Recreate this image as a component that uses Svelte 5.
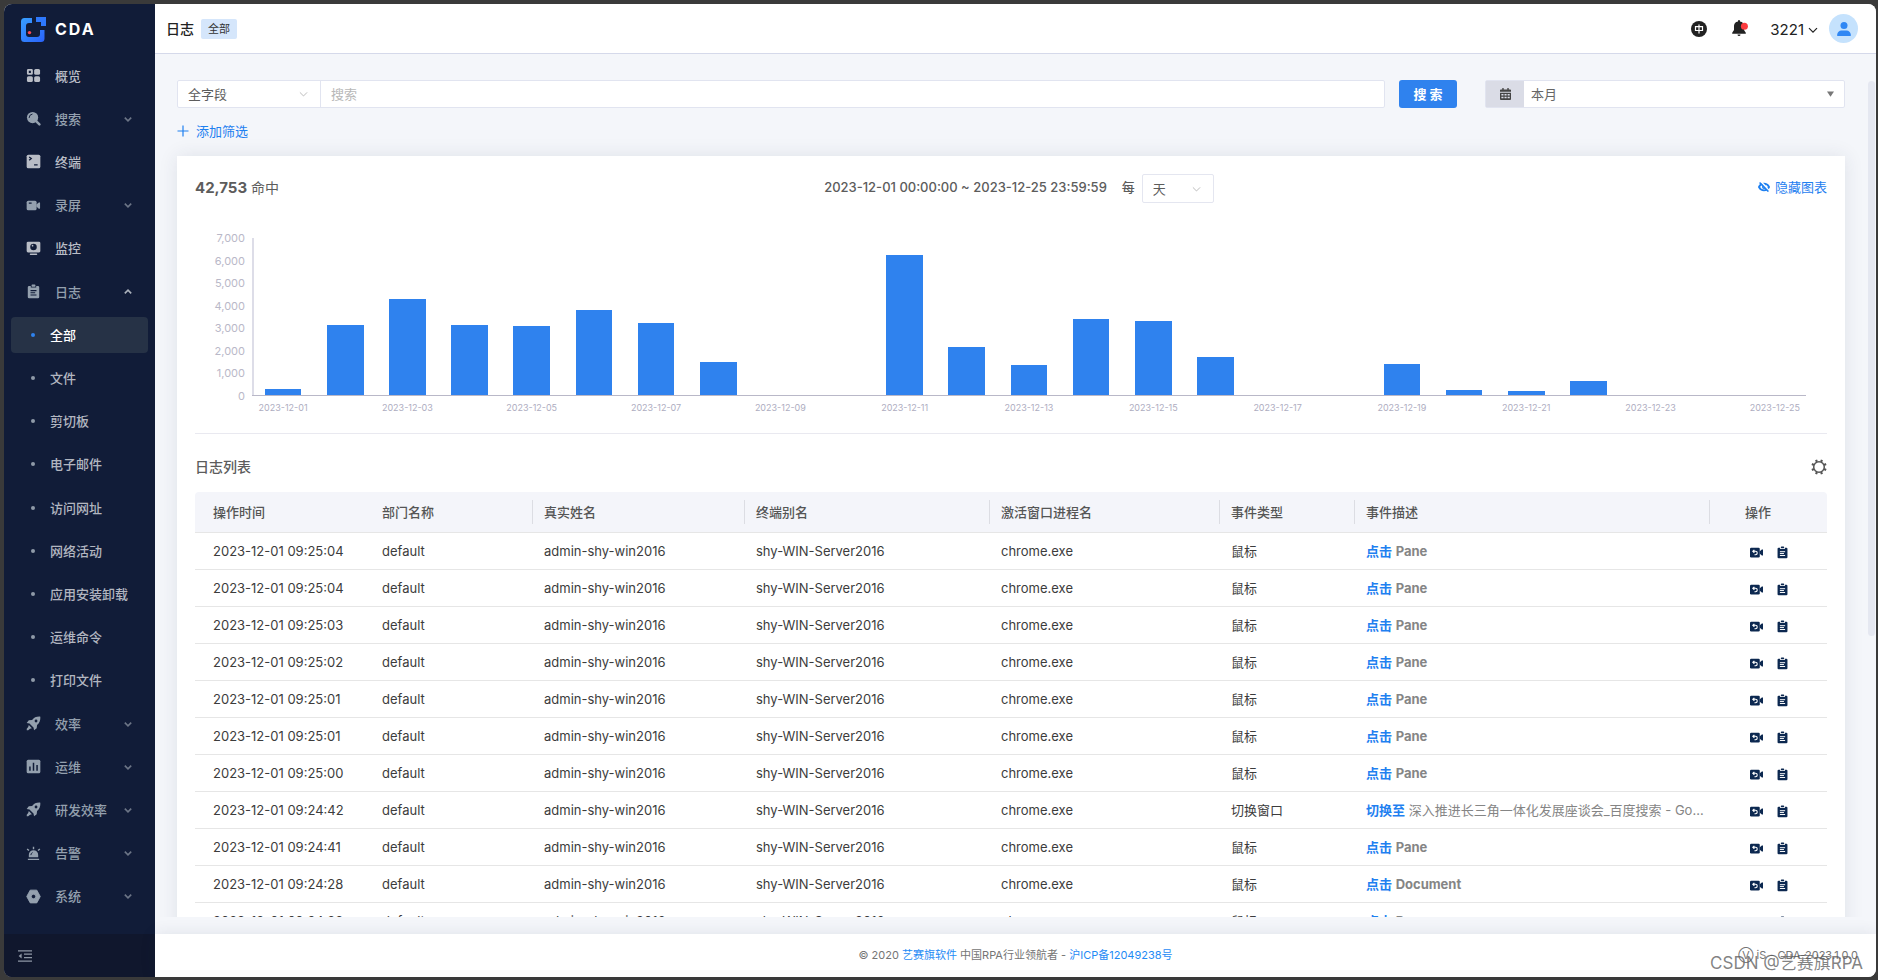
<script>
  const menu = [
    { icon: 'grid', label: '概览' },
    { icon: 'search', label: '搜索', fold: true },
    { icon: 'terminal', label: '终端' },
    { icon: 'video', label: '录屏', fold: true },
    { icon: 'monitor', label: '监控' },
    { icon: 'clipboard', label: '日志', fold: true, open: true },
    { sub: true, label: '全部', active: true },
    { sub: true, label: '文件' },
    { sub: true, label: '剪切板' },
    { sub: true, label: '电子邮件' },
    { sub: true, label: '访问网址' },
    { sub: true, label: '网络活动' },
    { sub: true, label: '应用安装卸载' },
    { sub: true, label: '运维命令' },
    { sub: true, label: '打印文件' },
    { icon: 'rocket', label: '效率', fold: true },
    { icon: 'bars', label: '运维', fold: true },
    { icon: 'rocket', label: '研发效率', fold: true },
    { icon: 'siren', label: '告警', fold: true },
    { icon: 'nut', label: '系统', fold: true }
  ];

  const hits = [270, 3110, 4265, 3115, 3095, 3805, 3225, 1490, 0, 0, 6240, 2155, 1340, 3405, 3300, 1695, 0, 0, 1400, 240, 160, 625, 0, 0, 0];
  const peak = 7000;
  const ticks = ['7,000', '6,000', '5,000', '4,000', '3,000', '2,000', '1,000', '0'];
  const day = (i) => `2023-12-${String(i + 1).padStart(2, '0')}`;

  const columns = [
    { name: '操作时间', w: 176 },
    { name: '部门名称', w: 162, sep: true },
    { name: '真实姓名', w: 212, sep: true },
    { name: '终端别名', w: 245, sep: true },
    { name: '激活窗口进程名', w: 230, sep: true },
    { name: '事件类型', w: 135, sep: true },
    { name: '事件描述', w: 355, sep: true },
    { name: '操作', w: 117 }
  ];
  const total = columns.reduce((s, c) => s + c.w, 0);

  const click = (time, target = 'Pane') => ({ time, type: '鼠标', verb: '点击', target, strong: true });
  const rows = [
    click('09:25:04'),
    click('09:25:04'),
    click('09:25:03'),
    click('09:25:02'),
    click('09:25:01'),
    click('09:25:01'),
    click('09:25:00'),
    { time: '09:24:42', type: '切换窗口', verb: '切换至', target: '深入推进长三角一体化发展座谈会_百度搜索 - Google Chrome' },
    click('09:24:41'),
    click('09:24:28', 'Document'),
    click('09:24:28')
  ];
</script>

{#snippet icon(name)}
  <svg class="icon" viewBox="0 0 16 16" aria-hidden="true">
    {#if name === 'grid'}
      <path fill-rule="evenodd" d="M2.500 1h3.300A1.500 1.500 0 0 1 7.300 2.500v3.300a1.500 1.500 0 0 1-1.500 1.500H2.500A1.500 1.500 0 0 1 1 5.800V2.500A1.500 1.500 0 0 1 2.500 1zM3 3v2.200h2.200V3z" />
      <rect x="8.700" y="1" width="6.300" height="6.300" rx="1.700" /><rect x="1" y="8.700" width="6.300" height="6.300" rx="1.700" /><rect x="8.700" y="8.700" width="6.300" height="6.300" rx="1.700" />
    {:else if name === 'search'}
      <circle cx="7" cy="7" r="6" /><path d="M10 10l4.300 4.300" stroke="currentColor" stroke-width="2.600" stroke-linecap="round" />
      <path d="M3.300 7A3.800 3.800 0 0 1 6.500 3.300" fill="none" stroke="#111c38" stroke-width="1" stroke-linecap="round" />
    {:else if name === 'terminal'}
      <rect x=".7" y=".7" width="14.600" height="14.600" rx="1.800" /><path d="M3.400 3.200l2.200 1.600-2.200 1.800M8.600 11.500h3.800" fill="none" stroke="#111c38" stroke-width="1.400" />
    {:else if name === 'video'}
      <rect x=".7" y="3" width="10.600" height="10" rx="1.600" /><path d="M11 7l3-2.600 1 .6v6l-1 .6L11 9z" /><path d="M3 5.500h3" stroke="#111c38" stroke-width="1.200" />
    {:else if name === 'monitor'}
      <rect x=".7" y=".7" width="14.600" height="11.500" rx="1.500" /><circle cx="8" cy="6.300" r="3.500" fill="#111c38" /><circle cx="7" cy="5" r=".9" /><rect x="4" y="13.400" width="8" height="1.500" rx=".7" />
    {:else if name === 'clipboard'}
      <path d="M3.300 2h1.800v1.800h5.800V2h1.800a1.400 1.400 0 0 1 1.400 1.400v10.400a1.400 1.400 0 0 1-1.400 1.400H3.300a1.400 1.400 0 0 1-1.400-1.400V3.400A1.400 1.400 0 0 1 3.300 2z" /><rect x="6" y=".6" width="4" height="2.300" rx=".6" />
      <path d="M4.800 7h6.400M4.800 9.300h5M4.800 11.700h6.400" stroke="var(--line, #111c38)" stroke-width="1.200" />
    {:else if name === 'rocket'}
      <path fill-rule="evenodd" d="M15.300.7c-4-.3-6.800 1-8.800 3.500L3 4.600.7 7.400l3 .6 4.300 4.300.6 3 2.800-2.300.4-3.500C14.300 7.500 15.600 4.700 15.300.7zM10.700 3.800a1.500 1.500 0 1 1 0 3 1.500 1.500 0 0 1 0-3z" /><path d="M3 9.700l3.300 3.300-2 .7-2 1.500H.8v-1.500l1.500-2z" />
    {:else if name === 'bars'}
      <rect x=".7" y=".7" width="14.600" height="14.600" rx="1.600" /><path d="M4.200 8v4.600M8 4v8.600M11.800 6.400v6.200" stroke="#111c38" stroke-width="1.600" />
    {:else if name === 'siren'}
      <path d="M3 12V9.500a5 5 0 0 1 10 0V12z" /><path d="M2 14.300h12" stroke="currentColor" stroke-width="1.500" /><path d="M8 .8v2.700M1.200 3.200l2 1.600M14.800 3.200l-2 1.600" stroke="currentColor" stroke-width="1.500" /><path d="M5.200 9.700A3 3 0 0 1 7 7" fill="none" stroke="#111c38" />
    {:else if name === 'nut'}
      <path fill-rule="evenodd" d="M4.500 1.200h7L15.200 8l-3.700 6.800h-7L.8 8zM8 5.600a2.400 2.400 0 1 0 0 4.800 2.400 2.400 0 0 0 0-4.800z" stroke="currentColor" stroke-linejoin="round" />
    {:else if name === 'replay'}
      <rect x="0" y="2" width="12" height="12" rx="1.500" /><path d="M12 6.500l2.600-2.300H16v7.600h-1.400L12 9.500z" /><path d="M3.600 6.500h3.200a2 2 0 0 1 0 4.200H5.500M5.400 4.700L3.500 6.500l1.900 1.800" fill="none" stroke="#fff" stroke-width="1.400" />
    {/if}
  </svg>
{/snippet}

{#snippet chevron()}
  <svg class="chev" viewBox="0 0 10 10" aria-hidden="true"><path d="M1 3.200L5 7.200l4-4" /></svg>
{/snippet}

<div class="desktop">
  <div class="window">
    <aside>
      <div class="brand">
        <svg viewBox="0 0 25 25" width="25" height="25" aria-hidden="true">
          <defs><linearGradient id="lg" x1="0" x2="1" y1="0" y2="1"><stop offset="0" stop-color="#38a0ff" /><stop offset="1" stop-color="#2a62fb" /></linearGradient></defs>
          <path fill="url(#lg)" d="M3.500 1H11v5H8a3 3 0 0 0-3 3v8a3 3 0 0 0 3 3h8a3 3 0 0 0 3-3v-4h4.500v8.500a3.500 3.500 0 0 1-3.500 3.500h-16.500A3.500 3.500 0 0 1 0 21.500v-17A3.500 3.500 0 0 1 3.500 1z" />
          <path fill="#2e78fc" d="M15 0h10v9h-5V5h-5z" />
          <circle cx="8.500" cy="15.600" r="1.700" fill="#ff4752" />
        </svg>
        <strong>CDA</strong>
      </div>
      <nav>
        {#each menu as m}
          <a href="#menu" class:sub={m.sub} class:active={m.active} class:fold={m.fold}>
            {#if m.sub}<i class="dot"></i>{:else}{@render icon(m.icon)}{/if}
            <span>{m.label}</span>
            {#if m.fold}<em class:open={m.open}>{@render chevron()}</em>{/if}
          </a>
        {/each}
      </nav>
      <button class="collapse" aria-label="收起菜单">
        <svg viewBox="0 0 14 12" width="14" height="12"><path d="M0 .8h14M6 4.200h8M6 7.600h8M0 11.200h14" stroke="currentColor" stroke-width="1.200" /><path d="M3.600 3.500v5L.6 6z" fill="currentColor" /></svg>
      </button>
    </aside>

    <main>
      <header>
        <h1>日志</h1>
        <span class="tag">全部</span>
        <div class="tools">
          <button aria-label="语言">
            <svg viewBox="0 0 16 16" width="16" height="16"><circle cx="8" cy="8" r="8" fill="#222" /><path d="M4.500 5.600h7v3.900h-7zM8 3.400v9" fill="none" stroke="#fff" stroke-width="1.200" /></svg>
          </button>
          <button class="bell" aria-label="通知">
            <svg viewBox="0 0 16 17" width="16" height="17"><path d="M6 1a1 1 0 0 1 2 0v.6c2.600.5 4 2.200 4 4.500v4l1.800 2.700v.9H.2v-.9L2 10.100v-4c0-2.300 1.400-4 4-4.500zM5.500 14.500h3a1.500 1.500 0 0 1-3 0z" fill="#222" /><circle cx="12.400" cy="6.300" r="3.500" fill="#fb3b3e" /></svg>
          </button>
          <button class="user">3221{@render chevron()}</button>
          <span class="avatar"><svg viewBox="0 0 14 14" width="14" height="14"><circle cx="7" cy="3.500" r="3.500" fill="#2f87f4" /><path d="M1 13.900c-.6 0-1-.4-.9-1C.4 10 2.300 8.400 4.300 8.400h5.400c2 0 3.900 1.600 4.200 4.500.1.600-.3 1-.9 1z" fill="#2f87f4" /></svg></span>
        </div>
      </header>

      <div class="scroller">
        <form class="query" onsubmit={(e) => e.preventDefault()}>
          <div class="combo">
            <label class="pick field"><select aria-label="字段"><option>全字段</option></select>{@render chevron()}</label>
            <input type="search" aria-label="搜索" placeholder="搜索" />
          </div>
          <button class="primary">搜 索</button>
          <label class="range">
            <span class="cal"><svg viewBox="0 0 12 13" width="11" height="12"><path fill-rule="evenodd" d="M2.500 0H4v1.500h4V0h1.500v1.500H11q1 0 1 1V12q0 1-1 1H1q-1 0-1-1V2.500q0-1 1-1h1.500zM0 4v1h12V4zm1.500 2.500v1.600h2.300V6.500zm3.400 0v1.600h2.300V6.500zm3.400 0v1.600h2.300V6.500zM1.500 9.500v1.600h2.300V9.500zm3.400 0v1.600h2.300V9.500zm3.400 0v1.600h2.300V9.500z" fill="#444" /></svg></span>
            <select aria-label="时间范围"><option>本月</option></select>
            <svg class="tri" viewBox="0 0 8 6" width="7" height="6"><path d="M0 0h8L4 6z" fill="#777" /></svg>
          </label>
        </form>
        <button class="link add"><svg viewBox="0 0 12 12" width="12" height="12"><path d="M6 .5v11M.5 6h11" stroke="currentColor" stroke-width="1.200" /></svg>添加筛选</button>

        <section class="card">
          <div class="summary">
            <p class="count"><b>42,753</b> 命中</p>
            <div class="span">
              <span class="dates">2023-12-01 00:00:00 ~ 2023-12-25 23:59:59</span>
              <label for="unit">每</label>
              <span class="pick unit"><select id="unit"><option>天</option></select>{@render chevron()}</span>
            </div>
            <button class="link hide"><svg viewBox="0 0 12 10" width="12" height="10" fill="none" stroke="currentColor"><path d="M.9 5C2 2.800 3.800 1.700 6 1.700S10 2.800 11.100 5C10 7.200 8.200 8.300 6 8.300S2 7.200.9 5z" stroke-width="1.700" /><circle cx="6" cy="5" r="1.300" stroke-width="1.400" /><path d="M3.400 0l8 9" stroke="#fff" stroke-width="1.500" /><path d="M1.600.6l8.800 9" stroke-width="1.500" /></svg>隐藏图表</button>
          </div>

          <div class="chart">
            <div class="scale">{#each ticks as t}<span>{t}</span>{/each}</div>
            <div class="plot">
              {#each hits as v}
                <div class="slot"><div class="bar" style:height="{(v / peak) * 100}%"></div></div>
              {/each}
            </div>
            <div class="days">
              {#each hits as _, i}<div>{#if i % 2 === 0}<span>{day(i)}</span>{/if}</div>{/each}
            </div>
          </div>

          <div class="heading">
            <h2>日志列表</h2>
            <button aria-label="设置">
              <svg viewBox="0 0 16 16" width="16" height="16" fill="none" stroke="#555"><circle cx="8" cy="8" r="5.300" stroke-width="1.500" />
                {#each [22.5, 67.5, 112.5, 157.5, 202.5, 247.5, 292.5, 337.5] as turn}
                  <path d="M8 .3v2.200" stroke-width="2.200" transform="rotate({turn} 8 8)" />
                {/each}
              </svg>
            </button>
          </div>

          <table>
            <colgroup>{#each columns as c}<col style:width="{(c.w / total) * 100}%" />{/each}</colgroup>
            <thead><tr>{#each columns as c}<th scope="col" class:sep={c.sep}>{c.name}</th>{/each}</tr></thead>
            <tbody>
              {#each rows as r}
                <tr>
                  <td>2023-12-01 {r.time}</td>
                  <td>default</td>
                  <td>admin-shy-win2016</td>
                  <td>shy-WIN-Server2016</td>
                  <td>chrome.exe</td>
                  <td>{r.type}</td>
                  <td class="what"><a href="#event">{r.verb}</a> <span class:strong={r.strong}>{r.target}</span></td>
                  <td class="acts"><button aria-label="回放">{@render icon('replay')}</button><button aria-label="详情">{@render icon('clipboard')}</button></td>
                </tr>
              {/each}
            </tbody>
          </table>
        </section>
      </div>
      <i class="thumb"></i>

      <footer>
        <p>© 2020 <a href="#site">艺赛旗软件</a> 中国RPA行业领航者 - <a href="#icp">沪ICP备12049238号</a></p>
        <span class="version">Ⓥ iS - CDA-2023.1.0.0</span>
        <span class="stamp">CSDN @艺赛旗RPA</span>
      </footer>
    </main>
  </div>
</div>

<style>
  :global(body) { background: #3a3a3a; }
  * { box-sizing: border-box; }
  .desktop {
    height: 100vh;
    padding: 4px 2px 3px 4px;
    background: #3a3a3a;
    color: #3c3c3c;
    font: 13px/20px Inter, "Noto Sans CJK SC", sans-serif;
  }
  .window { display: flex; height: 100%; border-radius: 8px; overflow: hidden; background: #f4f6fa; }
  button, select, input { font: inherit; color: inherit; border: 0; background: none; padding: 0; margin: 0; }
  button { cursor: pointer; }
  a { color: inherit; text-decoration: none; }
  p, h1, h2 { margin: 0; }
  .icon { width: 15px; height: 15px; fill: currentColor; display: block; }
  .chev { width: 10px; height: 10px; fill: none; stroke: currentColor; stroke-width: 1.2; display: block; }

  aside { flex: none; width: 151px; display: flex; flex-direction: column; background: #111c38; }
  .brand { display: flex; align-items: center; gap: 9px; height: 50px; padding: 0 17px; color: #fff; }
  .brand strong { font-size: 16px; font-weight: 700; letter-spacing: 2px; }
  nav { flex: 1; min-height: 0; display: grid; grid-auto-rows: 1fr; padding: 0 7px 16px; }
  nav a { display: flex; align-items: center; align-self: center; height: 36px; padding: 0 16px 0 15px; border-radius: 4px; color: #b9bdc6; font-weight: 500; }
  nav a span { padding-left: 14px; }
  nav a.fold { color: #94a0ae; }
  nav a.sub { color: #b2b6c0; }
  nav a.active { background: #263246; color: #fff; }
  nav em { margin-left: auto; color: #6c7586; }
  nav em .chev { width: 8px; height: 8px; stroke-width: 2; }
  nav em :global(.chev) { width: 8px; height: 8px; stroke-width: 2; }
  nav em.open { transform: rotate(180deg); color: #aab1bb; }
  .dot { width: 4px; height: 4px; margin: 0 1px 0 5px; border-radius: 50%; background: #8f9aa8; }
  .active .dot { background: #2f82ee; }
  .collapse { flex: none; height: 43px; padding: 0 14px; text-align: left; color: #8d97a5; background: #10172d; }
  .collapse svg { display: block; }

  main { position: relative; flex: 1; min-width: 0; display: flex; flex-direction: column; }
  header { flex: none; display: flex; align-items: center; height: 50px; padding: 0 18px 0 11px; background: #fff; border-bottom: 1px solid #d5d9ea; }
  h1 { font-size: 14px; font-weight: 500; color: #222; }
  .tag { margin-left: 7px; padding: 0 7px; background: #d5e6fb; border-radius: 2px; font-size: 11px; color: #333; }
  .tools { display: flex; align-items: center; margin-left: auto; color: #222; }
  .tools button { display: flex; align-items: center; }
  .tools .bell { margin: 0 22px 0 25px; }
  .tools .user { gap: 4px; padding-top: 2px; font-size: 15px; }
  .avatar { display: grid; place-items: center; width: 29px; height: 29px; margin-left: 11px; border-radius: 50%; background: #c5e2fd; }

  .scroller { flex: 1; min-height: 0; margin-bottom: 17px; padding: 26px 31px 0 22px; overflow-y: auto; scrollbar-width: none; }
  .thumb { position: absolute; top: 77px; right: 1px; width: 7px; height: 555px; border-radius: 4px; background: #e5e8f1; }
  .query { display: flex; height: 28px; }
  .combo { flex: 1; display: flex; margin-right: 14px; background: #fff; border: 1px solid #e1e4f0; border-radius: 2px; }
  .combo input { flex: 1; min-width: 0; padding: 0 10px 1px; border-left: 1px solid #e1e4f0; outline: 0; }
  .combo input::placeholder { color: #b8b8b8; }
  .pick { display: flex; align-items: center; color: #5c5c5c; }
  .pick select { appearance: none; flex: 1; min-width: 0; height: 100%; padding-left: 10px; outline: 0; }
  .pick :global(.chev) { flex: none; width: 9px; margin-right: 12px; stroke: #b4b4b4; stroke-width: 1; }
  .field { width: 142px; }
  .primary { width: 58px; background: #2f82ee; border-radius: 3px; color: #fff; font-weight: 700; }
  .range { display: flex; align-items: center; width: 360px; margin-left: 28px; background: #fff; border: 1px solid #e1e4f0; border-radius: 2px; }
  .range select { appearance: none; flex: 1; height: 100%; padding: 0 7px 1px; color: #666; outline: 0; }
  .cal { display: grid; place-items: center; align-self: stretch; width: 38px; background: #dadce6; }
  .tri { margin-right: 10px; }
  .link { display: flex; align-items: center; color: #1f80f0; }
  .add { gap: 7px; margin: 13px 0 15px; }

  .card { padding: 18px; background: #fff; box-shadow: 0 0 18px rgba(40, 50, 80, .1); }
  .summary { display: grid; grid-template-columns: 1fr auto 1fr; align-items: center; height: 28px; color: #5c5c5c; }
  .count { padding-bottom: 1px; font-size: 14px; }
  .count b { font-size: 15px; font-weight: 700; }
  .span { display: flex; align-items: center; padding-left: 16px; font-weight: 500; }
  .dates, .span label, .hide { padding-bottom: 3px; }
  .span label { margin: 0 7px 0 15px; }
  .unit { width: 72px; height: 29px; border: 1px solid #e4e6f0; border-radius: 2px; font-weight: 400; }
  .hide { justify-self: end; gap: 5px; }

  .chart { display: grid; grid-template: 158px 37px / 57px 1fr; padding: 36px 21px 0 0; border-bottom: 1px solid #e9e9f0; }
  .scale { display: flex; flex-direction: column; justify-content: space-between; align-items: end; margin: -6px 0; padding-right: 7px; color: #b9b8c8; font-size: 11px; line-height: 12px; }
  .plot { display: flex; border-bottom: 1px solid #b9b8c8; box-shadow: inset 2px 0 #dddde8; }
  .slot { flex: 1; display: flex; align-items: end; justify-content: center; }
  .bar { width: 59%; background: #2f82ee; }
  .days { grid-column: 2; display: flex; padding-top: 6px; color: #aeadbf; font-size: 9px; line-height: 12px; }
  .days div { flex: 1; min-width: 0; display: flex; justify-content: center; white-space: nowrap; }

  .heading { display: flex; align-items: center; justify-content: space-between; height: 58px; padding-top: 8px; }
  .heading button { display: flex; }
  h2 { font-size: 14px; font-weight: 500; color: #5c5c5c; }
  table { width: 100%; table-layout: fixed; border-collapse: separate; border-spacing: 0; }
  th, td { height: 37px; padding: 0 11px; text-align: left; white-space: nowrap; overflow: hidden; text-overflow: ellipsis; border-bottom: 1px solid #e6e6e6; }
  th { height: 41px; background: #f4f5fa; color: #555; font-weight: 500; }
  th.sep { background: linear-gradient(#dcdde3, #dcdde3) right center / 1px 24px no-repeat #f4f5fa; }
  th:first-child { border-top-left-radius: 4px; }
  th:last-child { border-top-right-radius: 4px; padding-left: 35px; }
  th:first-child, td:first-child { padding-left: 18px; }
  .what { padding-right: 4px; color: #858585; }
  .what a { color: #1f80f0; font-weight: 700; }
  .strong { font-weight: 700; }
  .acts { padding-left: 40px; color: #0c2850; --line: #fff; }
  .acts button { margin-right: 13px; vertical-align: middle; }
  .acts :global(.icon) { width: 13px; height: 13px; }

  footer { position: relative; flex: none; display: grid; place-items: center; height: 43px; padding-bottom: 2px; background: #fff; box-shadow: 0 0 16px rgba(40, 50, 80, .1); font-size: 11px; color: #757575; }
  footer a { color: #1f8bf5; }
  .version { position: absolute; right: 18px; top: 11px; }
  .stamp { position: absolute; right: 13px; bottom: 2px; color: rgba(90, 90, 90, .75); font-size: 17px; line-height: 24px; }
</style>
